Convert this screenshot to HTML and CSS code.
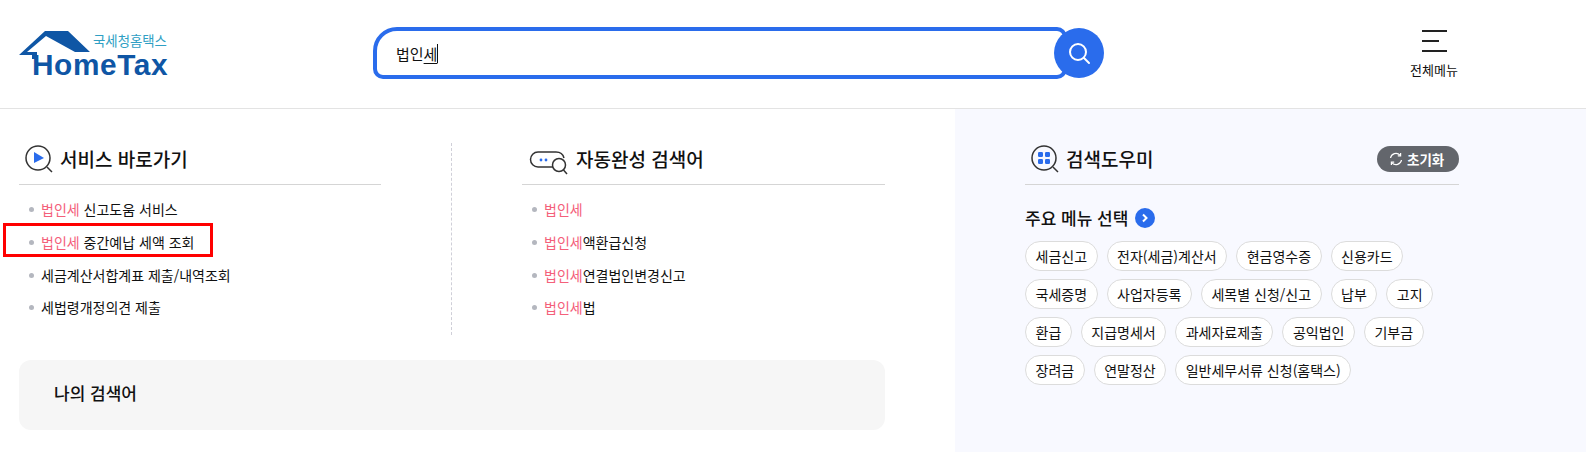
FILE: index.html
```html
<!DOCTYPE html>
<html lang="ko">
<head>
    <meta charset="UTF-8">
    <meta name="viewport" content="width=device-width, initial-scale=1.0">
    <title>국세청홈택스</title>
    <link rel="stylesheet" href="styles.css">
</head>
<body>
    <header class="top">
        <a class="logo" href="#">
            <svg class="logo-roof" width="72" height="28" viewBox="0 0 72 28">
                <path d="M0 24 L26 0 H49 L71 21 H56 L27 5 L8 21 H18 V28 H13 V24 Z" fill="#0f56a5"/>
            </svg>
            <span class="logo-ko">국세청홈택스</span>
            <span class="logo-en">HomeTax</span>
        </a>

        <form class="search" action="#">
            <div class="search-box">
                <span class="search-text">법인<u>세</u></span><span class="caret"></span>
            </div>
            <button class="search-btn" type="button" aria-label="검색">
                <svg width="24" height="24" viewBox="0 0 24 24" fill="none" stroke="#fff" stroke-width="2">
                    <circle cx="11" cy="11" r="8"/>
                    <path d="M17 17 L22 22" stroke-linecap="round"/>
                </svg>
            </button>
        </form>

        <a class="all-menu" href="#">
            <span class="burger"><i></i><i class="short"></i><i></i></span>
            <span class="all-menu-text">전체메뉴</span>
        </a>
    </header>

    <main class="content">
        <section class="left">
            <div class="columns">
                <div class="col">
                    <h3 class="col-title">
                        <svg width="30" height="30" viewBox="0 0 30 30" fill="none">
                            <circle cx="14" cy="14" r="12" stroke="#333" stroke-width="1.5"/>
                            <path d="M23 23 L28 28" stroke="#333" stroke-width="1.5"/>
                            <path d="M10 8 L20 14 L10 19 Z" fill="#2a6cec"/>
                        </svg>
                        서비스 바로가기
                    </h3>
                    <ul class="links">
                        <li><em>법인세</em> 신고도움 서비스</li>
                        <li class="marked"><em>법인세</em> 중간예납 세액 조회</li>
                        <li>세금계산서합계표 제출/내역조회</li>
                        <li>세법령개정의견 제출</li>
                    </ul>
                </div>
                <div class="col col-auto">
                    <h3 class="col-title">
                        <svg class="icon-auto" width="40" height="24" viewBox="0 0 40 24" fill="none">
                            <path d="M24 16 H9 A7.5 7.5 0 0 1 9 1 H27 C31 1 34 3 35 7" stroke="#333" stroke-width="1.5"/>
                            <circle cx="30" cy="14" r="6.5" stroke="#333" stroke-width="1.5"/>
                            <path d="M34.5 19 L38 23" stroke="#333" stroke-width="1.5"/>
                            <circle cx="12" cy="9" r="1.4" fill="#2a6cec"/>
                            <circle cx="17" cy="9" r="1.4" fill="#2a6cec"/>
                        </svg>
                        자동완성 검색어
                    </h3>
                    <ul class="links">
                        <li><em>법인세</em></li>
                        <li><em>법인세</em>액환급신청</li>
                        <li><em>법인세</em>연결법인변경신고</li>
                        <li><em>법인세</em>법</li>
                    </ul>
                </div>
            </div>
            <div class="my-words">나의 검색어</div>
        </section>

        <aside class="helper">
            <div class="helper-head">
                <h3 class="col-title">
                    <svg width="30" height="30" viewBox="0 0 30 30" fill="none">
                        <circle cx="14" cy="14" r="12" stroke="#333" stroke-width="1.5"/>
                        <path d="M23 23 L28 28" stroke="#333" stroke-width="1.5"/>
                        <rect x="8" y="8" width="5" height="5" rx="1.2" fill="#2a6cec"/>
                        <rect x="15" y="8" width="5" height="5" rx="1.2" fill="#2a6cec"/>
                        <rect x="8" y="15" width="5" height="5" rx="1.2" fill="#2a6cec"/>
                        <rect x="15" y="15" width="5" height="5" rx="1.2" fill="#2a6cec"/>
                    </svg>
                    검색도우미
                </h3>
                <button class="reset" type="button">
                    <svg width="14" height="14" viewBox="0 0 14 14" fill="none" stroke="#fff" stroke-width="1.2">
                        <path d="M1.5 6 A5.5 5.5 0 0 1 11 3.2"/>
                        <path d="M12.5 8 A5.5 5.5 0 0 1 3 10.8"/>
                        <path d="M11.6 1 V3.8 H8.8"/>
                        <path d="M2.4 13 V10.2 H5.2"/>
                    </svg>
                    초기화
                </button>
            </div>
            <div class="menu-label">
                주요 메뉴 선택
                <span class="menu-arrow">
                    <svg width="8" height="10" viewBox="0 0 8 10" fill="none" stroke="#fff" stroke-width="2"><path d="M2 1.5 L5.5 5 L2 8.5"/></svg>
                </span>
            </div>
            <div class="chips">
                <a class="chip" href="#">세금신고</a>
                <a class="chip" href="#">전자(세금)계산서</a>
                <a class="chip" href="#">현금영수증</a>
                <a class="chip" href="#">신용카드</a>
                <a class="chip" href="#">국세증명</a>
                <a class="chip" href="#">사업자등록</a>
                <a class="chip" href="#">세목별 신청/신고</a>
                <a class="chip" href="#">납부</a>
                <a class="chip" href="#">고지</a>
                <a class="chip" href="#">환급</a>
                <a class="chip" href="#">지급명세서</a>
                <a class="chip" href="#">과세자료제출</a>
                <a class="chip" href="#">공익법인</a>
                <a class="chip" href="#">기부금</a>
                <a class="chip" href="#">장려금</a>
                <a class="chip" href="#">연말정산</a>
                <a class="chip" href="#">일반세무서류 신청(홈택스)</a>
            </div>
        </aside>
    </main>
</body>
</html>
```

FILE: styles.css
```css
* {
    box-sizing: border-box;
}
html, body {
    margin: 0;
    padding: 0;
    height: 100%;
}
body {
    font-family: "Noto Sans CJK KR", "Noto Sans", sans-serif;
    font-size: 14px;
    color: #111;
    background-color: #fff;
    overflow: hidden;
}
a {
    color: inherit;
    text-decoration: none;
}

/* header */
.top {
    display: flex;
    align-items: flex-start;
    height: 109px;
    border-bottom: 1px solid #e3e3e3;
}
.logo {
    position: relative;
    display: block;
    width: 150px;
    height: 48px;
    margin: 31px 0 0 19px;
}
.logo-roof {
    position: absolute;
    left: 0;
    top: 0;
}
.logo-ko {
    position: absolute;
    left: 74px;
    top: 1px;
    font-size: 13.4px;
    line-height: 16px;
    color: #2f9fc4;
    white-space: nowrap;
}
.logo-en {
    position: absolute;
    left: 13px;
    top: 21px;
    font-family: "Liberation Sans", sans-serif;
    font-size: 29.8px;
    font-weight: 700;
    letter-spacing: 0.6px;
    line-height: 26px;
    color: #0f56a5;
    white-space: nowrap;
}
.search {
    display: flex;
    align-items: center;
    margin: 27px 0 0 204px;
}
.search-box {
    display: flex;
    align-items: center;
    width: 694px;
    height: 52px;
    padding-left: 19px;
    border: 4px solid #2a6cec;
    border-radius: 24px 10px 10px 10px;
    background-color: #fff;
    font-size: 15px;
}
.search-text u {
    text-underline-offset: 3px;
}
.caret {
    width: 1px;
    height: 19px;
    background-color: #111;
}
.search-btn {
    display: flex;
    align-items: center;
    justify-content: center;
    width: 50px;
    height: 50px;
    margin-left: -13px;
    border: none;
    border-radius: 50%;
    background-color: #2a6cec;
    position: relative;
}
.all-menu {
    display: flex;
    flex-direction: column;
    align-items: center;
    margin: 30px 0 0 300px;
    width: 60px;
}
.burger {
    display: flex;
    flex-direction: column;
    align-items: flex-start;
    gap: 8px;
    width: 25px;
    margin-bottom: 10px;
}
.burger i {
    display: block;
    width: 25px;
    height: 2px;
    background-color: #222;
}
.burger i.short {
    width: 17px;
}
.all-menu-text {
    font-size: 13px;
    line-height: 16px;
}

/* content */
.content {
    display: flex;
    height: 343px;
}
.left {
    width: 955px;
    padding: 32px 0 0 19px;
}
.columns {
    display: flex;
    height: 219px;
}
.col {
    width: 362px;
}
.col-auto {
    position: relative;
    width: 363px;
    margin-left: 141px;
}
.col-auto::before {
    content: "";
    position: absolute;
    left: -71px;
    top: 2px;
    height: 192px;
    border-left: 1px dashed #cfcfd8;
}
.col-title {
    display: flex;
    align-items: center;
    gap: 6px;
    height: 44px;
    margin: 0;
    padding-left: 5px;
    padding-bottom: 8px;
    border-bottom: 1px solid #d5d5d5;
    font-size: 19px;
    font-weight: 500;
}
.col-auto .col-title {
    gap: 7px;
    padding-left: 7px;
}
.icon-auto {
    margin-top: 8px;
}
.links {
    list-style: none;
    margin: 8px 0 0;
    padding: 0 0 0 10px;
}
.links li {
    position: relative;
    height: 32.8px;
    padding-left: 12px;
    line-height: 32px;
    font-size: 14px;
    white-space: nowrap;
}
.links li::before {
    content: "";
    position: absolute;
    left: 0;
    top: 14px;
    width: 5px;
    height: 5px;
    border-radius: 50%;
    background-color: #b4b7bf;
}
.links em {
    font-style: normal;
    color: #f4607a;
}
.links li.marked::after {
    content: "";
    box-sizing: border-box;
    position: absolute;
    left: -26px;
    top: -3px;
    width: 210px;
    height: 34px;
    border: 3px solid #f00;
}
.my-words {
    width: 866px;
    height: 70px;
    padding: 21px 35px;
    border-radius: 12px;
    background-color: #f6f6f6;
    font-size: 17px;
    font-weight: 500;
    line-height: 24px;
}

/* search helper */
.helper {
    width: 631px;
    padding: 32px 127px 0 70px;
    background-color: #f8f9ff;
}
.helper-head {
    position: relative;
}
.helper .col-title {
    padding-left: 5px;
}
.reset {
    position: absolute;
    right: 0;
    top: 5px;
    display: flex;
    align-items: center;
    gap: 4px;
    width: 82px;
    height: 26px;
    padding: 0 0 0 12px;
    border: none;
    border-radius: 13px;
    background-color: #63666c;
    color: #fff;
    font-family: inherit;
    font-size: 13.5px;
    font-weight: 700;
}
.menu-label {
    display: flex;
    align-items: center;
    gap: 7px;
    margin-top: 21px;
    font-size: 17px;
    font-weight: 500;
    line-height: 24px;
}
.menu-arrow {
    display: flex;
    align-items: center;
    justify-content: center;
    width: 20px;
    height: 20px;
    border-radius: 50%;
    background-color: #2a6cec;
}
.chips {
    display: flex;
    flex-wrap: wrap;
    gap: 8px 9px;
    margin-top: 11px;
}
.chip {
    height: 30px;
    padding: 0 9.5px;
    border: 1px solid #dcdcdc;
    border-radius: 15px;
    background-color: #fff;
    font-size: 14px;
    line-height: 28px;
    white-space: nowrap;
}
```
